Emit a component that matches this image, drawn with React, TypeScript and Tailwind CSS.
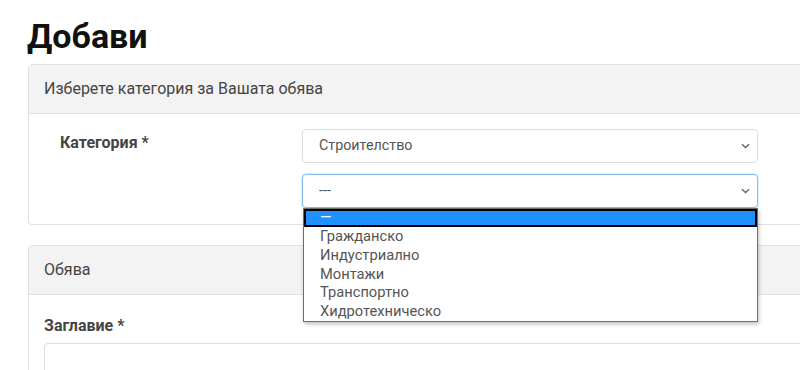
import React from "react";

const options = ["Гражданско", "Индустриално", "Монтажи", "Транспортно", "Хидротехническо"];

function Chevron() {
  return (
    <svg width="9" height="6" viewBox="0 0 9 6" className="absolute right-[7px] top-1/2 -translate-y-1/2">
      <path d="M1 1.2 L4.5 4.6 L8 1.2" fill="none" stroke="#666" strokeWidth="1.4" />
    </svg>
  );
}

function FakeSelect({ value, focused }: { value: string; focused?: boolean }) {
  return (
    <div
      className={
        "relative h-[34px] w-[456px] rounded-[4px] border bg-white pl-[16px] flex items-center text-[14.3px] text-[#555] " +
        (focused ? "border-[#86bdf5] shadow-[0_0_0_1px_rgba(128,189,255,0.25)]" : "border-[#dcdcdc]")
      }
    >
      {value}
      <Chevron />
    </div>
  );
}

export default function App() {
  return (
    <div className="w-[800px] h-[370px] overflow-hidden bg-white font-['Roboto',sans-serif] pl-[28px] pt-[16px]">
      <h1 className="text-[34px] leading-[40px] font-bold text-[#111] -ml-[1px]">Добави</h1>

      <div className="mt-[8px] w-[800px] rounded-[4px] border border-[#e1e1e1]">
        <div className="h-[49px] bg-[#f3f3f3] border-b border-[#e1e1e1] px-[15px] flex items-center text-[16px] text-[#444]">
          Изберете категория за Вашата обява
        </div>
        <div className="flex pt-[15px] pb-[16px] pl-[31px]">
          <div className="w-[242px] pt-[2px] text-[16px] leading-6 font-bold text-[#444]">Категория *</div>
          <div className="flex flex-col gap-[11px]">
            <FakeSelect value="Строителство" />
            <div className="relative">
              <FakeSelect value="---" focused />
              <div className="absolute left-[1px] top-[34px] w-[455px] border border-[#6e6e6e] bg-white shadow-[1px_2px_4px_rgba(0,0,0,0.25)] z-10 text-[14.7px] text-[#555]">
                <div className="h-[18px] bg-[#1e90ff] outline-2 outline-black -outline-offset-2 pl-[16px] leading-[16px] text-white">
                  —
                </div>
                {options.map((o) => (
                  <div key={o} className="h-[18.8px] leading-[18.8px] pl-[16px]">
                    {o}
                  </div>
                ))}
              </div>
            </div>
          </div>
        </div>
      </div>

      <div className="mt-[20px] w-[800px] rounded-[4px] border border-[#e1e1e1]">
        <div className="h-[49px] bg-[#f3f3f3] border-b border-[#e1e1e1] px-[15px] flex items-center text-[16px] text-[#444]">
          Обява
        </div>
        <div className="pt-[19px] px-[15px]">
          <div className="text-[16px] leading-6 font-bold text-[#444] mb-[5px]">Заглавие *</div>
          <div className="h-[34px] w-full rounded-[4px] border border-[#dcdcdc]" />
        </div>
      </div>
    </div>
  );
}
